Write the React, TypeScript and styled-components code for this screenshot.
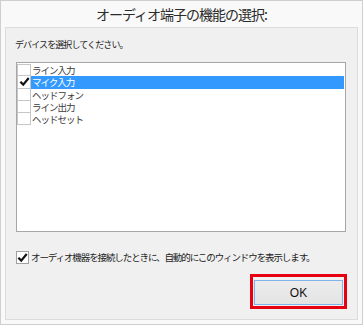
import styled, { createGlobalStyle } from 'styled-components'

const GlobalStyle = createGlobalStyle`
  html, body {
    margin: 0;
    padding: 0;
    background: #fff;
  }
  * {
    box-sizing: border-box;
  }
`

const Frame = styled.div`
  width: 363px;
  height: 325px;
  border: 1px solid #cfcfcf;
  background-color: #f9f9f9;
  padding: 0 4px 4px 4px;
  display: flex;
  flex-direction: column;
  font-family: 'Noto Sans CJK JP', 'Noto Sans', sans-serif;
  color: #1e1e1e;
`

const Title = styled.h1`
  margin: 0;
  height: 26px;
  line-height: 27px;
  font-size: 14px;
  letter-spacing: -1px;
  font-weight: 400;
  text-align: center;
  color: #2b2b2b;
`

const Panel = styled.div`
  flex: 1;
  border: 1px solid #dcdcdc;
  background-color: #f0f0f0;
  padding: 10px 10px 10px 10px;
  display: flex;
  flex-direction: column;
`

const Prompt = styled.p`
  margin: 0 0 0 -1px;
  font-size: 9px;
  letter-spacing: -0.9px;
  line-height: 14px;
  color: #222;
`

const ListBox = styled.div`
  margin-top: 10px;
  width: 330px;
  height: 170px;
  border: 1px solid #a7a7a7;
  background-color: #fff;
  padding-top: 1px;
  padding-right: 1px;
`

const Row = styled.div`
  height: 12.3px;
  display: flex;
  align-items: center;
  font-size: 9.5px;
  line-height: 12px;
  letter-spacing: -1px;
`

const Box = styled.span<{ $stacked?: boolean }>`
  width: 14px;
  height: 13.3px;
  margin-top: ${(p) => (p.$stacked ? '-1px' : '0')};
  border: 1px solid #c6c6c6;
  background-color: #fff;
  display: flex;
  align-items: center;
  justify-content: center;
  flex: none;
`

const Label = styled.span<{ $selected?: boolean }>`
  flex: 1;
  height: 100%;
  line-height: 12px;
  padding-left: 1px;
  white-space: nowrap;
  overflow: hidden;
  background-color: ${(p) => (p.$selected ? '#3399ff' : 'transparent')};
  color: ${(p) => (p.$selected ? '#fff' : '#3a3a3a')};
`

const AutoShow = styled.label`
  margin-top: 18px;
  display: flex;
  align-items: center;
  gap: 2px;
  font-size: 9.5px;
  letter-spacing: -1.1px;
  white-space: nowrap;
  color: #222;
`

const SmallBox = styled.span`
  width: 13px;
  height: 13px;
  border: 1px solid #a0a0a0;
  background-color: #fff;
  display: flex;
  align-items: center;
  justify-content: center;
  flex: none;
`

const Footer = styled.div`
  margin-top: auto;
  display: flex;
  justify-content: flex-end;
`

const Highlight = styled.div`
  border: 3px solid #e60012;
  padding: 1px;
`

const OkButton = styled.button`
  width: 89px;
  height: 25px;
  border: 1px solid #7eb4ea;
  background: linear-gradient(#ececec, #e4e4e4);
  font-family: 'Liberation Sans', Arial, sans-serif;
  font-size: 12px;
  color: #111;
  padding: 0;
`

const Check = ({ size = 11 }: { size?: number }) => (
  <svg width={size} height={size} viewBox="0 0 12 12">
    <path d="M1.5 6.2 L4.6 9.4 L10.6 2.2" fill="none" stroke="#111" strokeWidth="2.4" />
  </svg>
)

const items = [
  { label: 'ライン入力', checked: false },
  { label: 'マイク入力', checked: true },
  { label: 'ヘッドフォン', checked: false },
  { label: 'ライン出力', checked: false },
  { label: 'ヘッドセット', checked: false },
]

const App = () => (
  <>
    <GlobalStyle />
    <Frame>
      <Title>オーディオ端子の機能の選択:</Title>
      <Panel>
        <Prompt>デバイスを選択してください。</Prompt>
        <ListBox>
          {items.map((item, i) => (
            <Row key={item.label}>
              <Box $stacked={i > 0}>{item.checked && <Check />}</Box>
              <Label $selected={item.checked}>{item.label}</Label>
            </Row>
          ))}
        </ListBox>
        <AutoShow>
          <SmallBox>
            <Check />
          </SmallBox>
          オーディオ機器を接続したときに、自動的にこのウィンドウを表示します。
        </AutoShow>
        <Footer>
          <Highlight>
            <OkButton>OK</OkButton>
          </Highlight>
        </Footer>
      </Panel>
    </Frame>
  </>
)

export default App
